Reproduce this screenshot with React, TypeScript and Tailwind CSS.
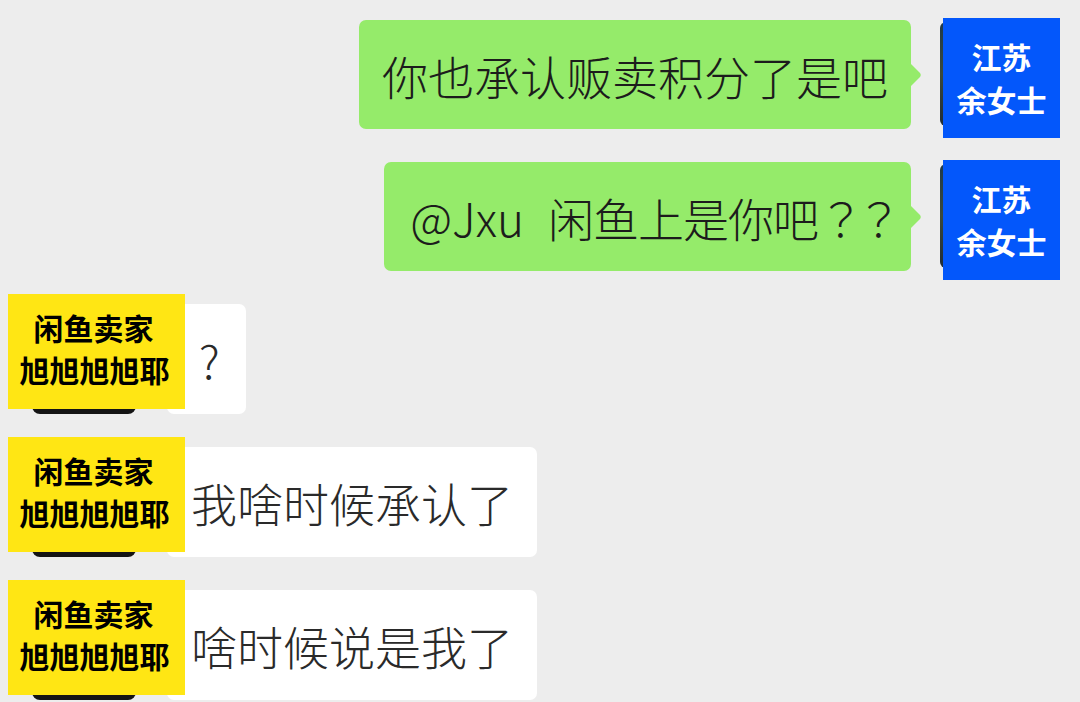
import React from 'react';

const cjk = { fontFamily: '"Noto Sans CJK SC", "Noto Sans", sans-serif' };
const tc = { fontFamily: '"Noto Sans CJK TC", "Noto Sans CJK SC", sans-serif' };

type Msg = {
  side: 'left' | 'right';
  text: React.ReactNode;
  pad?: string;
};

const messages: Msg[] = [
  { side: 'right', text: '你也承认贩卖积分了是吧' },
  {
    side: 'right',
    pad: 'pl-[26px] pr-[17px]',
    text: (
      <>
        <span>@Jxu</span>
        <span className="ml-[24px] tracking-[-1px]">闲鱼上是你吧</span>
        <span style={tc} className="tracking-[-8px]">？？</span>
      </>
    ),
  },
  { side: 'left', text: '?' },
  { side: 'left', text: '我啥时候承认了' },
  { side: 'left', text: '啥时候说是我了' },
];

function RightAvatar() {
  return (
    <div className="relative w-[120px] shrink-0 mt-[2px]">
      <div className="w-[104px] h-[104px] rounded-[6px] bg-gradient-to-b from-[#1f3a4a] via-[#3c4a3a] to-[#202c36]" />
      <div className="absolute left-[3px] -top-[4px] w-[117px] h-[120px] bg-[#0357fb] flex flex-col items-center justify-center text-white text-[30px] font-bold leading-[43px]">
        <span>江苏</span>
        <span>余女士</span>
      </div>
    </div>
  );
}

function LeftAvatar() {
  return (
    <div className="relative w-[104px] h-[104px] shrink-0 mt-[6px]">
      <div className="w-[104px] h-[104px] rounded-[8px] bg-[#141414]" />
      <div className="absolute -left-[24px] -top-[16px] w-[177px] h-[115px] bg-[#ffe614] flex flex-col items-center justify-center pb-[8px] text-black text-[30px] font-bold leading-[42px]">
        <span className="pr-[6px]">闲鱼卖家</span>
        <span className="pr-[4px]">旭旭旭旭耶</span>
      </div>
    </div>
  );
}

export default function App() {
  return (
    <div
      className="w-[1080px] h-[702px] overflow-hidden bg-[#ededed] flex flex-col gap-[33px] pt-[20px]"
      style={cjk}
    >
      {messages.map((m, i) =>
        m.side === 'right' ? (
          <div key={i} className="flex justify-end items-start pr-[20px]">
            <div
              className={`relative h-[109px] rounded-[7px] bg-[#95eb6a] flex items-center text-[46px] font-light text-[#1c1c1c] leading-none whitespace-nowrap ${
                m.pad || 'px-[23px]'
              }`}
            >
              <span>{m.text}</span>
              <svg
                className="absolute -right-[10px] top-[43px]"
                width="11"
                height="24"
                viewBox="0 0 11 24"
              >
                <path d="M0 0 L10 10 Q11.5 12 10 14 L0 24 Z" fill="#95eb6a" />
              </svg>
            </div>
            <div className="w-[29px]" />
            <RightAvatar />
          </div>
        ) : (
          <div key={i} className="flex items-start pl-[32px]">
            <LeftAvatar />
            <div className="w-[31px]" />
            <div className="h-[110px] rounded-[7px] bg-white px-[24px] flex items-center text-[46px] font-light text-[#2a2a2a] leading-none">
              <span className={m.text === '?' ? 'pl-[8px] pr-[2px]' : ''}>{m.text}</span>
            </div>
          </div>
        )
      )}
    </div>
  );
}
